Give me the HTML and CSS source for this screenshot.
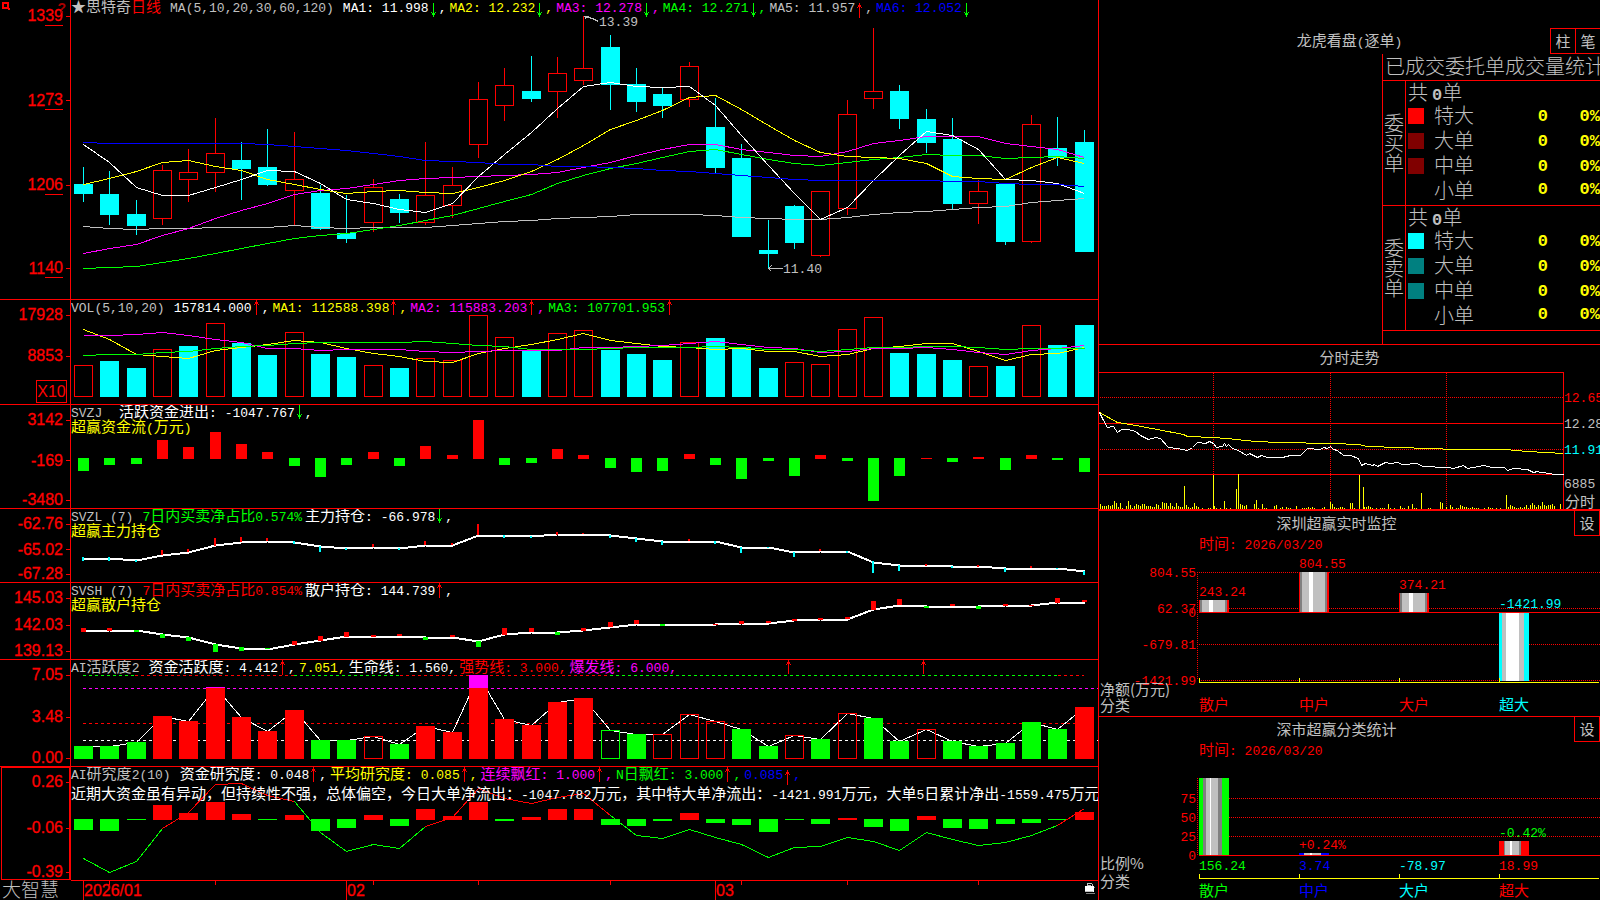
FILE: index.html
```html
<!DOCTYPE html>
<html lang="zh-CN">
<head>
<meta charset="utf-8">
<title>思特奇 日线</title>
<link rel="stylesheet" href="styles.css">
</head>
<body>
<svg class="defs" aria-hidden="true">
  <symbol id="down" viewBox="0 0 8 15"><path d="M3 0h1v14h-1zM1 9h1v1h1v1h1v-1h1v-1h1v1h-1v2h-1v2h-1v-2h-1v-2h-1z"/></symbol>
  <symbol id="up" viewBox="0 0 8 15"><path d="M3 0h1v15h-1zM2 2h3v2h-3zM1 4h1v1h-1zM5 4h1v1h-1z"/></symbol>
</svg>
<main class="terminal">
  <section class="charts">
    <section class="panel">
      <div class="axis axis-price">
        <svg class="pin" viewBox="0 0 8 8"><path d="M0 0h7v7h-7zM2 2v3h3v-3z" fill-rule="evenodd"/><path d="M6 6h2v2h-2z"/></svg>
        <span class="help">?</span>
        <span class="mark">13<u>39</u></span><span class="mark">12<u>73</u></span><span class="mark">12<u>06</u></span><span class="mark">11<u>40</u></span>
      </div>
      <div class="plot">
        <svg class="chart" id="price"></svg>
        <div class="legend">
          <span class="name"><span class="star">★</span><span class="zh">思特奇</span><span class="zh red">日线</span></span>
          <span class="name">MA(5,10,20,30,60,120)</span>
          <span class="white">MA1: 11.998<svg class="arrow green"><use href="#down"/></svg>,</span>
          <span class="yellow">MA2: 12.232<svg class="arrow green"><use href="#down"/></svg>,</span>
          <span class="magenta">MA3: 12.278<svg class="arrow green"><use href="#down"/></svg>,</span>
          <span class="green">MA4: 12.271<svg class="arrow green"><use href="#down"/></svg>,</span>
          <span class="silver">MA5: 11.957<svg class="arrow red"><use href="#up"/></svg>,</span>
          <span class="blue">MA6: 12.052<svg class="arrow green"><use href="#down"/></svg></span>
        </div>
      </div>
    </section>

    <section class="panel">
      <div class="axis axis-volume">
        <span class="mark">17928</span><span class="mark">8853</span><span class="unit">X10</span>
      </div>
      <div class="plot">
        <svg class="chart" id="volume"></svg>
        <div class="legend legend-latin">
          <span class="name">VOL(5,10,20)</span>
          <span class="white">157814.000<svg class="arrow red"><use href="#up"/></svg>,</span>
          <span class="yellow">MA1: 112588.398<svg class="arrow red"><use href="#up"/></svg>,</span>
          <span class="magenta">MA2: 115883.203<svg class="arrow red"><use href="#up"/></svg>,</span>
          <span class="green">MA3: 107701.953<svg class="arrow red"><use href="#up"/></svg></span>
        </div>
      </div>
    </section>

    <section class="panel">
      <div class="axis">
        <span class="mark">3142</span><span class="mark">-169</span><span class="mark">-3480</span>
      </div>
      <div class="plot">
        <svg class="chart" id="flow"></svg>
        <div class="legend">
          <span class="name">SVZJ </span>
          <span class="white"><span class="zh">活跃资金进出</span>: -1047.767<svg class="arrow green"><use href="#down"/></svg>,</span>
        </div>
        <div class="legend yellow"><span><span class="zh">超赢资金流</span>(<span class="zh">万元</span>)</span></div>
      </div>
    </section>

    <section class="panel">
      <div class="axis">
        <span class="mark">-62.76</span><span class="mark">-65.02</span><span class="mark">-67.28</span>
      </div>
      <div class="plot">
        <svg class="chart" id="mainHold"></svg>
        <div class="legend">
          <span class="name">SVZL (7)</span>
          <span class="green">7<span class="zh">日内买卖净占比</span>0.574%</span>
          <span class="white"><span class="zh">主力持仓</span>: -66.978<svg class="arrow green"><use href="#down"/></svg>,</span>
        </div>
        <div class="legend yellow"><span class="zh">超赢主力持仓</span></div>
      </div>
    </section>

    <section class="panel">
      <div class="axis">
        <span class="mark">145.03</span><span class="mark">142.03</span><span class="mark">139.13</span>
      </div>
      <div class="plot">
        <svg class="chart" id="retailHold"></svg>
        <div class="legend">
          <span class="name">SVSH (7)</span>
          <span class="red">7<span class="zh">日内买卖净占比</span>0.854%</span>
          <span class="white"><span class="zh">散户持仓</span>: 144.739<svg class="arrow red"><use href="#up"/></svg>,</span>
        </div>
        <div class="legend yellow"><span class="zh">超赢散户持仓</span></div>
      </div>
    </section>

    <section class="panel">
      <div class="axis">
        <span class="mark">7.05</span><span class="mark">3.48</span><span class="mark">0.00</span>
      </div>
      <div class="plot">
        <svg class="chart" id="active"></svg>
        <div class="legend">
          <span class="name">AI<span class="zh">活跃度</span>2</span>
          <span class="white"><span class="zh">资金活跃度</span>: 4.412<svg class="arrow red"><use href="#up"/></svg>,</span>
          <span class="yellow">7.051,</span>
          <span class="white"><span class="zh">生命线</span>: 1.560,</span>
          <span class="red"><span class="zh">强势线</span>: 3.000,</span>
          <span class="magenta"><span class="zh">爆发线</span>: 6.000,</span>
        </div>
      </div>
    </section>

    <section class="panel panel-last">
      <div class="axis axis-study">
        <span class="mark">0.26</span><span class="mark">-0.06</span><span class="mark">-0.39</span>
      </div>
      <div class="plot">
        <svg class="chart" id="study"></svg>
        <div class="legend">
          <span class="name">AI<span class="zh">研究度</span>2(10)</span>
          <span class="white"><span class="zh">资金研究度</span>: 0.048<svg class="arrow red"><use href="#up"/></svg>,</span>
          <span class="yellow"><span class="zh">平均研究度</span>: 0.085<svg class="arrow red"><use href="#up"/></svg>,</span>
          <span class="magenta"><span class="zh">连续飘红</span>: 1.000<svg class="arrow red"><use href="#up"/></svg>,</span>
          <span class="green">N<span class="zh">日飘红</span>: 3.000<svg class="arrow red"><use href="#up"/></svg>,</span>
          <span class="blue">0.085<svg class="arrow red"><use href="#up"/></svg>,</span>
        </div>
        <p class="comment"><span class="zh">近期大资金虽有异动，但持续性不强，总体偏空，今日大单净流出：</span>-1047.782<span class="zh">万元，其中特大单净流出：</span>-1421.991<span class="zh">万元，大单</span>5<span class="zh">日累计净出</span>-1559.475<span class="zh">万元</span></p>
      </div>
    </section>

    <section class="timeline">
      <div class="brand">大智慧</div>
      <div class="plot">
        <svg class="chart" id="dates"></svg>
        <svg class="lock" viewBox="0 0 10 12"><path d="M2 4v-2l1-1h3l1 1v2M3 3h3" fill="none" stroke="#c0c0c0"/><path d="M1 11h9v-6h-1" fill="none" stroke="#808080"/><path d="M0 4h9v6h-9z" fill="#fff"/><path d="M0 9h8v1h-8z" fill="#c0c0c0"/></svg>
      </div>
    </section>
  </section>

  <aside class="side">
    <section class="orders">
      <header class="orders-head">
        <h2 class="title"><span class="zh">龙虎看盘</span>(<span class="zh">逐单</span>)</h2>
        <div class="tabs"><button type="button">柱</button><button type="button">笔</button></div>
      </header>
      <div class="stats">
        <h3>已成交委托单成交量统计</h3>
        <table>
          <tbody>
            <tr class="total"><th class="group" rowspan="5" scope="rowgroup">委买单</th><td colspan="4">共<b>0</b>单</td></tr>
            <tr><td class="key"><i class="swatch red-1"></i></td><th scope="row">特大</th><td class="num">0</td><td class="num">0%</td></tr>
            <tr><td class="key"><i class="swatch red-2"></i></td><th scope="row">大单</th><td class="num">0</td><td class="num">0%</td></tr>
            <tr><td class="key"><i class="swatch red-2"></i></td><th scope="row">中单</th><td class="num">0</td><td class="num">0%</td></tr>
            <tr class="end"><td class="key"></td><th scope="row">小单</th><td class="num">0</td><td class="num">0%</td></tr>
          </tbody>
          <tbody>
            <tr class="total"><th class="group" rowspan="5" scope="rowgroup">委卖单</th><td colspan="4">共<b>0</b>单</td></tr>
            <tr><td class="key"><i class="swatch cyan-1"></i></td><th scope="row">特大</th><td class="num">0</td><td class="num">0%</td></tr>
            <tr><td class="key"><i class="swatch cyan-2"></i></td><th scope="row">大单</th><td class="num">0</td><td class="num">0%</td></tr>
            <tr><td class="key"><i class="swatch cyan-2"></i></td><th scope="row">中单</th><td class="num">0</td><td class="num">0%</td></tr>
            <tr class="end"><td class="key"></td><th scope="row">小单</th><td class="num">0</td><td class="num">0%</td></tr>
          </tbody>
        </table>
      </div>
    </section>

    <section class="intraday">
      <h2 class="title"><span class="zh">分时走势</span></h2>
      <div class="plot"><svg class="chart" id="intraday"></svg></div>
    </section>

    <section class="monitor">
      <header class="monitor-head"><h2 class="title"><span class="zh">深圳超赢实时监控</span></h2><button type="button">设</button></header>
      <p class="time"><span class="zh">时间</span>: 2026/03/20</p>
      <div class="plot"><svg class="chart" id="netAmount"></svg></div>
    </section>

    <section class="monitor monitor-last">
      <header class="monitor-head"><h2 class="title"><span class="zh">深市超赢分类统计</span></h2><button type="button">设</button></header>
      <p class="time"><span class="zh">时间</span>: 2026/03/20</p>
      <div class="plot"><svg class="chart" id="ratio"></svg></div>
    </section>
  </aside>
</main>
<script src="charts.js"></script>
</body>
</html>
```

FILE: styles.css
```css
* { box-sizing: border-box; margin: 0; padding: 0; }

body {
  background: #000;
  color: #c0c0c0;
  font: 13px/15px "Liberation Mono", "Noto Sans CJK SC", monospace;
}

.defs { position: absolute; width: 0; height: 0; }
.zh { font-family: "Noto Sans CJK SC", sans-serif; font-size: 15px; }

.white { color: #fff; }
.yellow { color: #ff0; }
.magenta { color: #f0f; }
.green { color: #0f0; }
.silver { color: #c0c0c0; }
.blue { color: #00f; }
.red { color: #f00; }

.terminal {
  display: grid;
  grid-template-columns: 1099fr 501fr;
  grid-template-rows: minmax(0, 1fr);
  height: 100vh;
}

/* left column */
.charts {
  display: grid;
  grid-template-rows: minmax(0, 300fr) minmax(0, 105fr) minmax(0, 104fr) minmax(0, 74fr) minmax(0, 77fr) minmax(0, 107fr) minmax(0, 113fr) minmax(0, 20fr);
  min-width: 0;
  border-right: 1px solid #f00;
}
.panel, .timeline { display: grid; grid-template-columns: 71px minmax(0, 1fr); grid-template-rows: minmax(0, 1fr); }
.panel { border-bottom: 1px solid #f00; }
.panel-last { border-bottom: 0; }

.axis {
  display: flex;
  flex-direction: column;
  justify-content: space-between;
  padding-top: 6px;
  border-right: 1px solid #f00;
  color: #f00;
  font: 16px/18px "Liberation Sans", Arial, sans-serif;
  text-align: right;
}
.mark { display: flex; justify-content: flex-end; align-items: center; height: 18px; -webkit-text-stroke: 0.3px #f00; }
.mark:last-child { height: 16px; }
.mark::after { content: ""; width: 4px; height: 1px; margin-left: 3px; background: #f00; }
.mark u { height: 19px; text-decoration: none; border-bottom: 1px solid #f00; }
.axis-price { position: relative; padding: 7px 0 22px; }
.axis-volume { justify-content: flex-start; padding-bottom: 1px; }
.axis-volume .mark { margin-bottom: 23px; }
.axis-study { margin-left: 1px; padding-top: 5px; border: 1px solid #f00; border-right-width: 2px; }
.axis-study .mark { margin-right: -1px; }
.axis-study .mark:last-child { height: 14px; }
.unit {
  width: 31px; height: 23px; margin: -8px 3px 0 auto;
  border: 1px solid #f00;
  font-size: 16px; line-height: 21px; text-align: center;
}
.pin { position: absolute; left: 2px; top: 2px; width: 8px; height: 8px; fill: #f00; }
.help { position: absolute; right: 4px; top: 1px; color: #a00; font-size: 14px; font-weight: bold; line-height: 14px; }

.plot { position: relative; overflow: hidden; min-width: 0; min-height: 0; }
.chart { position: absolute; left: 0; top: 0; width: 100%; height: 100%; shape-rendering: crispEdges; }
.legend { position: relative; display: flex; align-items: baseline; gap: 3px; height: 15px; line-height: 12px; white-space: pre; }
.legend-latin { line-height: 17px; }
.legend .name { margin-right: 6px; }
.star { display: inline-block; width: 15px; font: 15px/12px "Noto Sans CJK SC", sans-serif; }
.arrow { width: 8px; height: 15px; margin: 0 1px; vertical-align: top; fill: currentColor; }
.comment { position: relative; margin-top: 3px; color: #fff; line-height: 16px; white-space: nowrap; }

.timeline .plot { border-top: 1px solid #f00; }
.timeline .brand {
  padding-left: 2px;
  font: 300 19px/18px "Noto Sans CJK SC", sans-serif;
}
.lock { position: absolute; right: 3px; top: 1px; width: 10px; height: 12px; shape-rendering: crispEdges; }

/* right column */
.side {
  display: grid;
  grid-template-rows: minmax(0, 345fr) minmax(0, 166fr) minmax(0, 206fr) minmax(0, 183fr);
  min-width: 0;
}
.title { font: inherit; text-align: center; }
button {
  width: 26px; height: 26px;
  border: 1px solid #f00; border-right: 0;
  background: #000; color: #c0c0c0;
  font: 15px/20px "Noto Sans CJK SC", sans-serif;
}

.orders { display: flex; flex-direction: column; padding-top: 28px; border-bottom: 1px solid #f00; overflow: hidden; }
.orders-head { display: grid; grid-template-columns: 1fr auto 1fr; align-items: center; height: 26px; }
.orders-head .title { grid-column: 2; }
.tabs { display: flex; justify-self: end; }
.tabs button { width: 25px; }
.stats {
  flex: 1;
  width: 218px; margin-left: auto;
  border-left: 1px solid #f00;
  overflow: hidden;
  font: 300 20px/20px "Noto Sans CJK SC", sans-serif;
}
.stats h3 { height: 27px; padding-left: 2px; border-bottom: 1px solid #f00; font: inherit; line-height: 24px; white-space: nowrap; }
.stats table { width: 100%; border-collapse: separate; border-spacing: 0; }
.stats tr { height: 25px; }
.stats th { padding: 0 0 3px 2px; font-weight: inherit; text-align: left; }
.stats .total { height: 23px; }
.stats .total td { padding-left: 2px; white-space: pre; }
.stats b { margin-left: 4px; font: bold 17px/17px "Liberation Mono", monospace; }
.stats .end { height: 27px; }
.stats .end td, .stats .end th { padding-bottom: 4px; border-bottom: 1px solid #f00; }
.stats .group {
  width: 23px; padding: 0 1px;
  border-right: 1px solid #f00; border-bottom: 1px solid #f00;
  word-break: break-all;
}
.stats .key { width: 26px; padding: 0 0 1px 2px; }
.swatch { display: block; width: 16px; height: 16px; }
.red-1 { background: #f00; }
.red-2 { background: #800000; }
.cyan-1 { background: #0ff; }
.cyan-2 { background: #008080; }
.num { width: 52px; color: #ff0; font: bold 17px/20px "Liberation Mono", monospace; text-align: right; }

.intraday { display: flex; flex-direction: column; border-bottom: 2px solid #f00; }
.intraday .title { height: 27px; line-height: 23px; }
.intraday .plot { flex: 1; }

.monitor { display: flex; flex-direction: column; border-bottom: 1px solid #f00; }
.monitor-last { border-bottom: 0; }
.monitor-head { display: flex; height: 25px; }
.monitor-head .title { flex: 1; line-height: 23px; }
.monitor-head button { height: 25px; border-top: 0; border-right: 1px solid #f00; }
.time { height: 18px; padding-left: 100px; color: #f00; line-height: 13px; }
.monitor .plot { flex: 1; }

.chart text { font: 13px "Liberation Mono", monospace; white-space: pre; }
.chart .cjk { font: 15px "Noto Sans CJK SC", sans-serif; }
.chart .date { font: 16px "Liberation Sans", Arial, sans-serif; stroke: #f00; stroke-width: 0.3px; }
```

FILE: charts.js
```js
const RED = '#f00', GREEN = '#0f0', CYAN = '#0ff', WHITE = '#fff', YELLOW = '#ff0',
  MAGENTA = '#f0f', SILVER = '#c0c0c0', BLUE = '#00f', GRAY = '#808080';

// Drawing surface: design units are scaled to the size of the element.
function surface(id, refW, refH) {
  const svg = document.getElementById(id);
  const box = svg.getBoundingClientRect();
  const X = v => Math.round(v * box.width / refW);
  const Y = v => Math.round(v * box.height / refH);
  svg.replaceChildren();
  const add = (name, attrs, text) => {
    const node = document.createElementNS('http://www.w3.org/2000/svg', name);
    for (const key in attrs) node.setAttribute(key, attrs[key]);
    if (text !== undefined) node.textContent = text;
    svg.appendChild(node);
  };
  return {
    X, Y, add,
    fill: (x, y, w, h, color) => add('rect', { x, y, width: w, height: Math.max(1, h), fill: color }),
    frame: (x, y, w, h, color) => add('rect', { x: x + .5, y: y + .5, width: w - 1, height: Math.max(1, h - 1), fill: 'none', stroke: color }),
    line: (points, color, width = 1) => add('polyline', {
      points: points.map(p => `${X(p[0]) + .5},${Y(p[1]) + .5}`).join(' '),
      fill: 'none', stroke: color, 'stroke-width': width
    }),
    rule: (x1, y1, x2, y2, color, dash) => add('line', {
      x1: X(x1) + (x1 === x2 ? .5 : 0), y1: Y(y1) + (y1 === y2 ? .5 : 0),
      x2: X(x2) + (x1 === x2 ? .5 : 0), y2: Y(y2) + (y1 === y2 ? .5 : 0),
      stroke: color, 'stroke-dasharray': dash || 'none'
    }),
    text: (x, y, text, color, cls = '', anchor = 'start') =>
      add('text', { x: X(x), y: Y(y) + (cls === 'cjk' ? 6 : 4), fill: color, class: cls, 'text-anchor': anchor }, text)
  };
}

const W = 1027;
const slot = i => 12 + 26.33 * i;
const series = values => values.map((y, i) => [slot(i), y]);

const candles = [
  'c 167 184 194 202', 'c 171 194 215 225', 'c 200 214 226 235', 'r 165 170 219 225', 'r 149 172 180 202',
  'r 118 153 173 192', 'c 142 160 169 200', 'c 129 167 185 186', 'r 132 179 191 225', 'c 185 193 229 230',
  'c 195 233 239 243', 'r 179 187 223 232', 'c 194 199 213 223', 'r 142 195 223 225', 'r 167 185 206 218',
  'r 82 99 145 158', 'r 68 85 106 121', 'c 56 91 99 102', 'r 57 73 92 118', 'r 16 68 81 85',
  'c 35 47 85 110', 'c 68 84 102 112', 'c 87 94 106 118', 'r 62 66 100 107', 'c 98 127 168 173',
  'c 144 158 237 237', 'c 220 250 254 268', 'c 205 206 243 249', 'r 191 191 256 257', 'r 100 114 209 215',
  'r 28 91 99 109', 'c 85 91 119 129', 'c 109 119 143 153', 'c 118 139 204 210', 'r 180 191 204 224',
  'c 184 184 242 245', 'r 115 124 242 243', 'c 117 148 158 166', 'c 130 142 252 252'
].map(s => s.split(' '));

function drawPrice() {
  const s = surface('price', W, 299);
  candles.forEach(([kind, ...v], i) => {
    const [high, top, bottom, low] = v.map(n => s.Y(+n)), x = s.X(slot(i));
    const color = kind === 'c' ? CYAN : RED;
    if (kind === 'c') {
      s.fill(x, high, 1, low - high, color);
      s.fill(x - 9, top, 19, bottom - top, color);
    } else {
      if (top > high) s.fill(x, high, 1, top - high, color);
      if (low > bottom) s.fill(x, bottom, 1, low - bottom, color);
      s.frame(x - 9, top, 19, bottom - top, color);
    }
  });
  s.line(series([226,228,229,228,228,227,227,227,225,227,228,227,227,227,225,223,221,220,218,217,216,214,214,214,215,217,218,219,219,217,214,212,211,209,207,206,202,200,198]), SILVER);
  s.line(series([268,267,266,262,258,253,248,243,238,235,233,229,225,220,215,208,201,194,183,175,168,163,157,151,149,154,159,163,165,162,159,157,154,155,155,158,157,156,158]), GREEN);
  s.line(series([253,248,244,235,228,218,210,203,194,190,188,184,180,178,177,176,175,174,172,167,162,155,149,144,144,149,152,155,156,151,143,140,136,136,136,143,146,149,157]), MAGENTA);
  s.line(series([184,178,171,162,160,166,170,179,184,189,193,191,190,192,193,187,180,171,159,145,129,120,110,97,95,109,125,140,152,156,157,158,163,176,178,179,167,157,163]), YELLOW);
  s.line(series([144,162,187,195,195,187,179,170,171,183,199,203,209,212,203,176,154,132,108,86,82,86,87,86,105,135,165,193,219,207,180,155,131,135,149,179,180,183,193]), WHITE);
  s.line(series([142,143,143,143,143,143,143,144,146,148,150,153,156,160,161,162,164,164,166,166,167,168,170,171,173,175,177,179,180,180,180,180,180,181,181,183,184,184,186]), BLUE);
  s.line([[513, 16], [521, 18], [527, 21]], SILVER);
  s.line([[515, 19], [513, 16], [517, 16]], SILVER);
  s.text(528, 22, '13.39', SILVER);
  s.line([[697, 268], [711, 268]], SILVER);
  s.line([[700, 265], [697, 268], [700, 271]], SILVER);
  s.text(712, 269, '11.40', SILVER);
}

function drawVolume() {
  const s = surface('volume', W, 104);
  const tops = [65,61,68,49,46,23,43,55,32,54,57,65,68,58,60,15,37,51,33,30,50,54,60,42,38,47,68,62,64,29,17,53,54,60,66,66,25,45,25];
  const kinds = 'rccrcrccrccrcrrrrcrrcccrcccrrrrcccrcrcc';
  tops.forEach((t, i) => {
    const draw = kinds[i] === 'c' ? s.fill : s.frame;
    draw(s.X(slot(i)) - 9, s.Y(t), 19, s.Y(97) - s.Y(t), kinds[i] === 'c' ? CYAN : RED);
  });
  s.line(series([29,39,54,56,58,50,47,44,40,42,48,53,56,61,62,53,48,44,39,33,40,43,46,47,49,48,51,51,56,54,48,46,43,43,51,60,54,53,47]), YELLOW);
  s.line(series([35,35,34,32,35,39,42,48,48,50,49,49,49,51,52,51,50,50,50,47,47,46,45,43,41,44,47,48,52,51,48,48,47,49,52,54,50,48,45]), MAGENTA);
  s.line(series([55,54,54,52,51,48,46,45,43,42,42,42,42,41,43,45,46,49,49,49,48,47,47,47,46,47,49,49,51,49,47,47,46,46,47,49,48,48,48]), GREEN);
}

// Bars that grow up (red) or down (green) from a zero line.
function drawSigned(s, ends, zero, width) {
  ends.forEach((v, i) => {
    const x = s.X(slot(i)) - (width - 1) / 2, end = s.Y(Math.abs(v));
    if (v < zero) s.fill(x, end, width, s.Y(zero + 1) - end, RED);
    else s.fill(x, s.Y(zero), width, end - s.Y(zero), GREEN);
  });
}

function drawFlow() {
  const s = surface('flow', W, 103);
  drawSigned(s, [66,60,59,35,42,27,39,47,61,72,60,47,61,41,50,15,60,58,44,50,63,67,66,49,60,74,56,71,50,56,96,71,-53,57,52,65,50,55,67], 53, 11);
}

function drawMarks(s, marks, width, colors) {
  marks.split(',').forEach((m, i) => {
    if (!m) return;
    const [a, b] = m.slice(1).split('-').map(Number);
    s.fill(s.X(slot(i)) - Math.floor(width / 2), s.Y(a), width, s.Y(b) - s.Y(a), colors[m[0]]);
  });
}

function drawMainHold() {
  const s = surface('mainHold', W, 73);
  s.line(series([49,49,51,46,43,36,33,32,33,37,39,38,39,36,36,26,26,27,25,25,26,29,32,32,32,38,38,43,42,42,53,56,56,57,57,59,59,59,62]), WHITE, 2);
  drawMarks(s, 'c48-52,c48-52,c51-53,r41-46,r40-43,r29-37,r28-33,r29-32,c32-35,c37-43,c39-41,r35-38,c39-41,r32-36,r34-36,r15-26,c26-29,c27-29,r23-26,r24-25,c26-29,c29-33,c32-36,r30-32,c32-35,c38-44,c38-39,c43-48,r40-42,c42-44,c52-64,c56-62,r55-57,c57-59,r56-58,c59-63,r57-59,c59-60,c62-66', 2, { r: RED, c: CYAN });
}

function drawRetailHold() {
  const s = surface('retailHold', W, 76);
  s.line(series([48,47,47,51,54,61,65,66,61,57,53,53,53,54,54,58,51,49,49,47,44,41,41,41,41,40,40,37,36,36,26,22,23,23,23,22,22,19,19]), WHITE, 2);
  drawMarks(s, 'r45-49,r45-48,g47-49,g51-55,g54-58,g61-69,g64-68,g65-66,r58-62,r53-58,r49-54,r52-54,r51-53,g54-57,r52-54,g58-64,r45-52,r45-49,g49-52,r45-48,r39-44,r37-41,g41-43,,r41-42,r38-41,r38-40,r36-38,r35-37,r34-36,r18-27,r16-22,g23-25,r21-23,g23-26,r21-23,r22-23,r15-20,r17-19', 5, { r: RED, g: GREEN });
}

function drawActive() {
  const s = surface('active', W, 106);
  const tops = [86,86,82,56,61,27,57,71,50,80,80,76,84,66,72,15,59,65,42,38,70,74,74,54,61,69,86,75,79,53,58,81,69,81,86,83,62,69,47];
  // g/R solid green/red, h/r hollow green/red
  const kinds = 'gggRRRRRRggrgRRRRRRRhgrrrggrgrggrgggggR';
  const dash = '3 3';
  [[12, 64, GREEN], [64, 223, RED], [223, 329, GREEN], [329, 539, RED], [539, 987, GREEN], [987, 1013, RED]]
    .forEach(([a, b, color]) => s.rule(a, 15, b, 15, color, dash));
  s.rule(12, 28, W, 28, MAGENTA, dash);
  s.rule(12, 63, 1013, 63, RED, dash);
  s.rule(12, 80, W, 80, WHITE, dash);
  s.line(series(tops), WHITE);
  tops.forEach((t, i) => {
    const k = kinds[i], x = s.X(slot(i)) - 9, h = s.Y(99) - s.Y(t);
    if (k === 'g') s.fill(x, s.Y(t), 19, h, GREEN);
    if (k === 'R') s.fill(x, s.Y(t), 19, h, RED);
    if (k === 'r') s.frame(x, s.Y(t), 19, h, RED);
    if (k === 'h') s.frame(x, s.Y(t), 19, h, GREEN);
    if (t < 28) s.fill(x, s.Y(t), 19, s.Y(28) - s.Y(t), MAGENTA);
  });
  [717, 852].forEach(x => {
    s.rule(x, 0, x, 14, RED);
    s.fill(s.X(x) - 1, 2, 3, 2, RED);
    s.fill(s.X(x) - 2, 4, 1, 1, RED);
    s.fill(s.X(x) + 2, 4, 1, 1, RED);
  });
}

function drawStudy() {
  const s = surface('study', W, 113);
  drawSigned(s, [63,64,53,38,46,35,47,53,48,64,61,48,59,42,49,35,54,50,42,42,58,59,54,46,56,58,65,53,57,51,60,64,49,61,62,57,56,53,45], 52, 19);
  const y = [91,105,94,61,45,17,16,28,34,65,84,77,81,59,50,21,31,36,30,26,48,68,71,62,70,77,90,80,79,70,74,83,65,72,78,75,68,58,41];
  const pts = series(y);
  [[0, 3, GREEN], [3, 8, RED], [8, 13, GREEN], [13, 20, RED], [20, 37, GREEN], [37, 38, RED]]
    .forEach(([a, b, color]) => s.line(pts.slice(a, b + 1), color));
}

function drawDates() {
  const s = surface('dates', W, 19);
  [1, 5, 11, 15, 20, 25, 29, 34].forEach(i => s.fill(s.X(slot(i)), 0, 1, 4, RED));
  [[0, '2026/01'], [10, '02'], [24, '03']].forEach(([i, label]) => {
    s.fill(s.X(slot(i)), 0, 1, 19, RED);
    s.add('text', { x: s.X(slot(i)) + 1, y: 15, fill: RED, class: 'date' }, label);
  });
}

function drawIntraday() {
  const s = surface('intraday', 501, 137);
  s.rule(0, 0, 465, 0, RED);
  s.rule(464, 0, 464, 137, RED);
  s.rule(0, 51, 465, 51, RED);
  s.rule(0, 102, 465, 102, RED);
  [25, 77].forEach(y => s.rule(1, y, 464, y, RED, '1 1'));
  [114, 231, 347].forEach(x => s.rule(x, 1, x, 137, RED, '1 1'));
  const pairs = str => str.split(' ').map(p => p.split(',').map(Number));
  const small = [
    '533343486261038', '41354355333225417', '663632632204212', '632010011031', '01081010000',
    '54340005910511', '000340120211003', '001112121', '000120075211221', '006610000223',
    '210101110', '51010031103051100', '00011000076020', '4201143221121110010', '2110101007243',
    '21121241464243', '7434453005'
  ].join('');
  [...small].forEach((digit, k) => {
    if (+digit) s.fill(s.X(1 + 2 * k), s.Y(137 - digit), 1, s.Y(+digit), YELLOW);
  });
  pairs('85,114 114,103 137,117 139,102 260,103 264,115 322,121')
    .forEach(([x, y]) => s.fill(s.X(x), s.Y(y), 1, s.Y(137) - s.Y(y), YELLOW));
  s.fill(s.X(407), s.Y(123), 1, s.Y(137) - s.Y(123), YELLOW);
  s.line(pairs('0,40 18,50 31,52 58,57 84,62 88,64 114,65 138,67 144,68 158,69 179,70 233,71 259,72 268,74 301,75 328,76 358,77 406,77 428,79 446,80 464,81'), YELLOW);
  s.line(pairs('0,40 3,46 8,55 14,54 18,60 22,57 29,57 36,59 41,63 49,67 56,65 61,66 69,75 78,76 88,78 93,75 98,70 106,71 110,69 114,71 117,75 123,74 125,71 127,74 129,72 133,76 139,78 147,83 150,81 158,85 162,83 168,85 174,85 183,85 191,83 201,83 208,76 221,77 224,75 228,76 231,74 234,77 238,78 244,83 251,83 259,86 262,93 266,91 273,93 275,92 278,94 286,90 291,91 298,90 303,92 318,91 323,94 348,95 354,96 364,93 368,96 374,95 384,93 393,95 405,95 408,98 414,96 428,97 434,100 438,99 441,100 451,101 454,102 464,102'), WHITE);
  s.text(465, 26, '12.65', RED);
  s.text(465, 52, '12.28', SILVER);
  s.text(465, 78, '11.91', CYAN);
  s.text(465, 112, '6885', SILVER);
  s.text(466, 129, '分时', SILVER, 'cjk');
}

// Bar shaded with vertical stripes, like a lit cylinder.
function tube(s, x, top, bottom, stripes) {
  let left = s.X(x);
  stripes.forEach(([w, color]) => {
    s.fill(left, s.Y(top), w, s.Y(bottom) - s.Y(top), color);
    left += w;
  });
}

function columnAxis(s, y) {
  s.rule(100, y, 500, y, YELLOW);
  [100, 200, 300, 400].forEach(x => s.rule(x, y - 4, x, y, YELLOW));
}

function drawNetAmount() {
  const s = surface('netAmount', 501, 162);
  s.rule(98, 18, 98, 126, RED, '1 1');
  [18, 54, 90, 126].forEach(y => s.rule(100, y, 501, y, RED, '1 1'));
  const rise = [[1, RED], [2, GRAY], [7, SILVER], [4, WHITE], [12, SILVER], [2, GRAY], [2, RED]];
  tube(s, 100, 46, 58, rise);
  tube(s, 200, 18, 58, rise);
  tube(s, 300, 39, 58, rise);
  s.rule(100, 58, 501, 58, RED);
  tube(s, 400, 59, 127, [[3, CYAN], [4, SILVER], [13, WHITE], [5, SILVER], [5, CYAN]]);
  columnAxis(s, 128);
  [[19, '804.55'], [55, '62.37'], [59, '0'], [91, '-679.81'], [127, '-1421.99']]
    .forEach(([y, t]) => s.text(97, y, t, RED, '', 'end'));
  s.text(100, 38, '243.24', RED);
  s.text(200, 10, '804.55', RED);
  s.text(300, 31, '374.21', RED);
  s.text(400, 50, '-1421.99', CYAN);
  s.text(1, 135, '净额(万元)', SILVER, 'cjk');
  s.text(1, 151, '分类', SILVER, 'cjk');
  ['散户', '中户', '大户', '超大'].forEach((t, i) => s.text(100 + 100 * i, 150, t, i < 3 ? RED : CYAN, 'cjk'));
}

function drawRatio() {
  const s = surface('ratio', 501, 140);
  s.rule(98, 18, 98, 95, RED, '1 1');
  [38, 57, 76].forEach(y => s.rule(100, y, 501, y, RED, '1 1'));
  tube(s, 100, 18, 95, [[4, GREEN], [3, GRAY], [4, SILVER], [1, WHITE], [7, SILVER], [4, GRAY], [7, GREEN]]);
  tube(s, 200, 93, 95, [[5, BLUE], [6, SILVER], [2, WHITE], [9, SILVER], [8, BLUE]]);
  tube(s, 400, 81, 95, [[5, RED], [1, GRAY], [5, SILVER], [2, WHITE], [7, SILVER], [2, GRAY], [8, RED]]);
  s.rule(100, 95, 501, 95, RED);
  columnAxis(s, 118);
  [[39, '75'], [58, '50'], [77, '25'], [96, '0']].forEach(([y, t]) => s.text(97, y, t, RED, '', 'end'));
  s.text(200, 85, '+0.24%', RED);
  s.text(400, 73, '-0.42%', GREEN);
  s.text(1, 103, '比例%', SILVER, 'cjk');
  s.text(1, 121, '分类', SILVER, 'cjk');
  [['156.24', '散户', GREEN], ['3.74', '中户', BLUE], ['-78.97', '大户', CYAN], ['18.99', '超大', RED]].forEach(([v, t, color], i) => {
    s.text(100 + 100 * i, 106, v, color);
    s.text(100 + 100 * i, 130, t, color, 'cjk');
  });
}

function drawAll() {
  [drawPrice, drawVolume, drawFlow, drawMainHold, drawRetailHold, drawActive, drawStudy, drawDates, drawIntraday, drawNetAmount, drawRatio].forEach(f => f());
}
drawAll();
window.addEventListener('resize', drawAll);
```
